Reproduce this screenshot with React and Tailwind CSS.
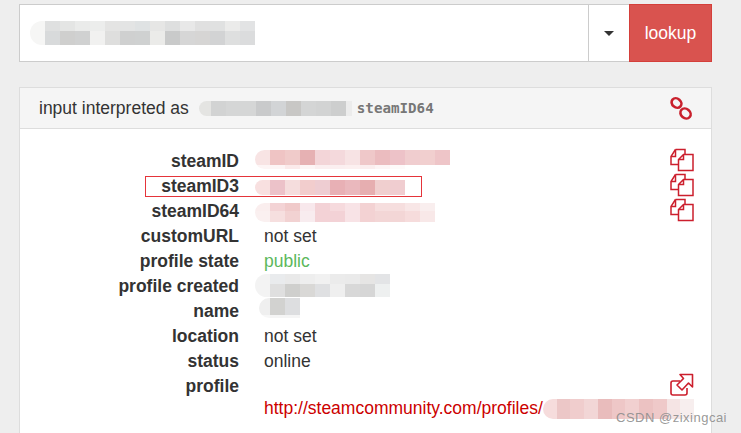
const copyIcon = (
  <svg viewBox="0 0 24 24" className="-mt-[2px] h-6 w-6" fill="none" stroke="#cc1f2d" strokeWidth="1.5">
    <path d="M5.5 1.5H15V6" />
    <path d="M5.5 1.5 1 8.5v8h7.5" />
    <path d="M1 8.5h4.5v-7" />
    <path d="M13.5 6.5h9.5V22.5H8.5V11.5l5-5zM8.5 11.5h5v-5" />
  </svg>
);

function Mosaic({ rows, h, first = 15, last = 15, className = '' }) {
  return (
    <div className={`flex flex-col overflow-hidden rounded-l-full rounded-r ${className}`}>
      {rows.map((row, i) => (
        <div key={i} className="flex">
          {row.map((c, j) => (
            <div
              key={j}
              style={{
                background: c,
                height: h[i],
                width: j === 0 ? first : j === row.length - 1 ? last : 15,
              }}
            />
          ))}
        </div>
      ))}
    </div>
  );
}

const inputTop = ['#f6f6f5', '#dfe0e0', '#e4e5e4', '#eaebea', '#ecedec', '#e4e4e3', '#e3e4e4', '#dfe2e3', '#e6e6e5', '#dedfdf', '#e8e8e8', '#e0e0e0', '#e0e1e1', '#ebebea', '#e2e3e4'];
const inputBottom = ['#f6f6f5', '#d8dadb', '#cfcfce', '#d0d1d1', '#f1f1f0', '#dededd', '#cfd0d0', '#cfd1d1', '#ebebe9', '#c9caca', '#d6d6d6', '#d6d5d4', '#d2d3d4', '#dedfdf', '#dbdcdd'];

const steamIdTop = ['#f8e4e4', '#efc4c4', '#f0cbca', '#e6b1b3', '#f3d5d8', '#f4d9dc', '#f7e3e4', '#efc8c9', '#ebbcbf', '#edc2c8', '#f0cdcf', '#f1cfcf', '#eec5c8'];
const steamIdStrip = ['#fdf5f5', '#fdf5f5', '#fbeaea', '#fdf5f5', '#fbeff0', '#fbeff0', '#fcf0f0', '#fbeeee', '#fdf5f5', '#fefafa', '#ffffff', '#ffffff', '#ffffff'];
const steamId3 = ['#f8e0e0', '#ecc2c9', '#f5dddd', '#f2cdcd', '#eecdd2', '#e8b0b5', '#eab8bd', '#e6aeb0', '#f0cfcf', '#f0cdd0'];
const steamId64Top = ['#faeeee', '#f3d3d5', '#f0caca', '#f8e8ec', '#f3d2d6', '#f6dadd', '#f8e3e6', '#f3d2d3', '#f6dede', '#f6dede', '#f8e6e6', '#f9eeee'];
const steamId64Bottom = ['#faf0f0', '#f6dfdf', '#f2d2d2', '#f8ecef', '#f3d2d6', '#f3d2d6', '#f8e3e6', '#f3d2d3', '#f3d6d6', '#f3d6d6', '#f6dcdc', '#f8e8e8'];
const createdTop = ['#f3f3f3', '#e9ebed', '#e9e9e9', '#eeeeee', '#f1f1f1', '#ebebeb', '#eaeaea', '#e6e5e4', '#e3e4e6'];
const createdBottom = ['#f3f3f3', '#dfdfdf', '#cfcfcd', '#d9d8d6', '#dfe0e2', '#efefef', '#d8d8d8', '#d6d6d6', '#eef0f0'];
const link = ['#f6dcdc', '#ecc7c7', '#f0cdcd', '#f2d6d6', '#e9bcbc', '#eec7c7', '#f1d0d0', '#ecc2c2', '#efc9c9', '#f5e4e4', '#f7eeee'];

const rows = [
  { label: 'steamID', value: <Mosaic className="-mt-[3px]" rows={[steamIdTop, steamIdStrip]} h={[15, 4]} />, icon: copyIcon },
  { label: 'steamID3', value: <Mosaic className="mt-[3px]" rows={[steamId3]} h={[15]} />, icon: copyIcon },
  { label: 'steamID64', value: <Mosaic className="mt-[3px]" rows={[steamId64Top, steamId64Bottom]} h={[8, 11]} />, icon: copyIcon },
  { label: 'customURL', value: <span className="pl-[9px] pt-[2px]">not set</span> },
  { label: 'profile state', value: <span className="pl-[9px] pt-[2px] text-[#5cb85c]">public</span> },
  { label: 'profile created', value: <Mosaic rows={[createdTop, createdBottom]} h={[10, 13]} /> },
  { label: 'name', value: <Mosaic className="-mt-[6px] ml-[4px]" rows={[['#efefef', '#d2d2d0', '#dddee0'], ['#f7f7f7', '#f5f5f5', '#f5f5f5']]} h={[17, 3]} first={11} /> },
  { label: 'location', value: <span className="pl-[9px] pt-[2px]">not set</span> },
  { label: 'status', value: <span className="pl-[9px] pt-[2px]">online</span> },
  {
    label: 'profile',
    value: null,
    icon: (
      <svg viewBox="0 0 24 24" className="-mt-[2px] h-6 w-6" fill="none" stroke="#cc1f2d" strokeWidth="1.6" strokeLinejoin="round">
        <path d="M10 8H3a2 2 0 0 0-2 2v10a2 2 0 0 0 2 2h12a2 2 0 0 0 2-2v-5" />
        <path d="M10 1.5h12.5V14l-4-4-6.5 7-5-5 6.5-6.5z" />
      </svg>
    ),
  },
];

export default function App() {
  return (
    <div className="relative h-[433px] w-[741px] overflow-hidden bg-[#eeeeee] px-[19px] pt-1 font-['Liberation_Sans',Arial,sans-serif] text-[17.5px] text-[#333333]">
      <div className="flex h-[58px] w-[693px]">
        <div className="flex flex-1 items-center border border-r-0 border-[#cccccc] bg-white pl-[10px]">
          <Mosaic rows={[inputTop, inputBottom]} h={[10, 14]} />
        </div>
        <div className="flex w-[41px] items-center justify-center border-y border-l border-[#cccccc] bg-white">
          <div className="h-0 w-0 border-x-[5px] border-t-[5px] border-x-transparent border-t-[#333333]" />
        </div>
        <div className="flex w-[83px] items-center justify-center border border-[#d43f3a] bg-[#d9534f] text-white">
          lookup
        </div>
      </div>

      <div className="mt-[25px] w-[693px] border border-[#dddddd] bg-white pb-[40px]">
        <div className="flex h-[41px] items-center justify-between border-b border-[#dddddd] bg-[#f5f5f5] pl-[19px] pr-[17px]">
          <div className="flex items-center">
            <span>input interpreted as</span>
            <Mosaic
              className="ml-[10px]"
              rows={[['#e4e4e2', '#d2d3d3', '#d5d6d6', '#d5d6d6', '#c9cacb', '#d2d4d6', '#c8c7c5', '#d4d5d5', '#d2d3d3', '#cdcece', '#ececec']]}
              h={[15]}
              first={12}
              last={6}
            />
            <span className="ml-[5px] pt-[1px] font-['DejaVu_Sans_Mono',monospace] text-[14.2px] font-bold text-[#777777]">steamID64</span>
          </div>
          <svg viewBox="0 0 24 24" className="h-6 w-6" fill="none" stroke="#c9202c" strokeWidth="2.6">
            <ellipse cx="6.5" cy="7" rx="5.2" ry="4.4" transform="rotate(40 6.5 7)" />
            <ellipse cx="15.5" cy="17.5" rx="5.5" ry="4.6" transform="rotate(40 15.5 17.5)" />
          </svg>
        </div>

        <div className="pl-[19px] pr-[17px] pt-[19px]">
          {rows.map((r) => (
            <div key={r.label} className="flex h-[25px] items-center">
              <div className="w-[200px] pt-[2px] text-right font-bold">{r.label}</div>
              <div className="ml-[16px] flex flex-1 items-center">{r.value}</div>
              {r.icon}
            </div>
          ))}
          <div className="ml-[225px] flex h-[21px] items-center">
            <span className="text-[#cc0000]">http://steamcommunity.com/profiles/</span>
            <Mosaic rows={[link]} h={[20]} />
          </div>
        </div>
      </div>

      <div className="absolute left-[145px] top-[176px] h-[21px] w-[277px] border border-[#e5343a]" />
      <div className="absolute left-[616px] top-[408px] text-[13px] tracking-[0.5px] text-[#8d8d8d]/90">CSDN @zixingcai</div>
    </div>
  );
}
